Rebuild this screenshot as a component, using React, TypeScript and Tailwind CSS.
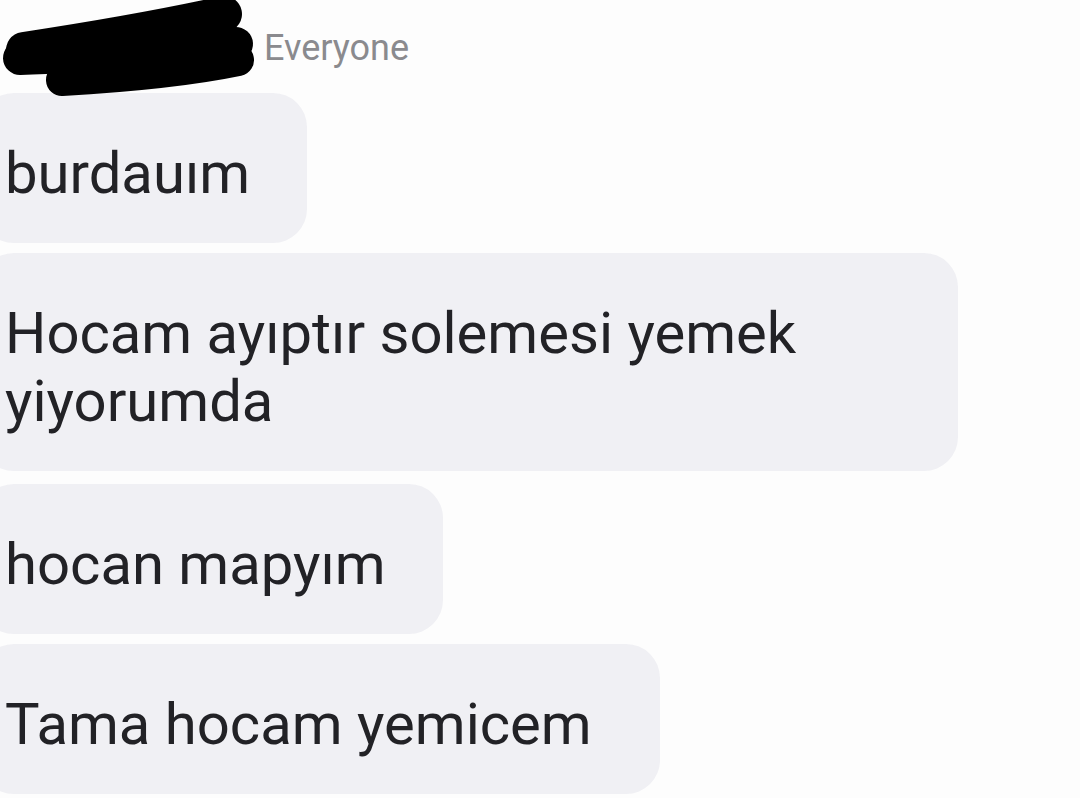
import React from "react";

const Bubble = ({ children, className = "" }: { children: React.ReactNode; className?: string }) => (
  <div
    className={
      "-ml-[20px] pl-[25px] pt-[46px] pb-[36px] rounded-[34px] bg-[#f0f0f4] text-[#222226] text-[58px] leading-[68px] " +
      className
    }
  >
    {children}
  </div>
);

export default function App() {
  return (
    <div
      className="w-[1080px] h-[798px] overflow-hidden bg-[#fdfdfd]"
      style={{ fontFamily: "Roboto, 'Noto Sans', sans-serif" }}
    >
      <div className="relative h-[93px]">
        <svg className="absolute left-0 top-0" width="260" height="100" viewBox="0 0 260 100">
          <g stroke="#000" strokeLinecap="round" fill="none">
            <path d="M24 50 C 90 40, 160 28, 224 14" strokeWidth="36" />
            <path d="M20 58 C 90 56, 170 48, 236 44" strokeWidth="34" />
            <path d="M62 80 C 130 76, 190 70, 238 60" strokeWidth="32" />
          </g>
        </svg>
        <div className="absolute left-[264px] top-[26px] text-[36px] leading-[44px] text-[#8a8a8e]">
          Everyone
        </div>
      </div>
      <div className="flex flex-col items-start">
        <Bubble className="pr-[57px]">burdauım</Bubble>
        <Bubble className="pr-[57px] mt-[10px] max-w-[978px]">Hocam ayıptır solemesi yemek yiyorumda</Bubble>
        <Bubble className="pr-[57px] mt-[13px]">hocan mapyım</Bubble>
        <Bubble className="pr-[68px] mt-[10px]">Tama hocam yemicem</Bubble>
      </div>
    </div>
  );
}
